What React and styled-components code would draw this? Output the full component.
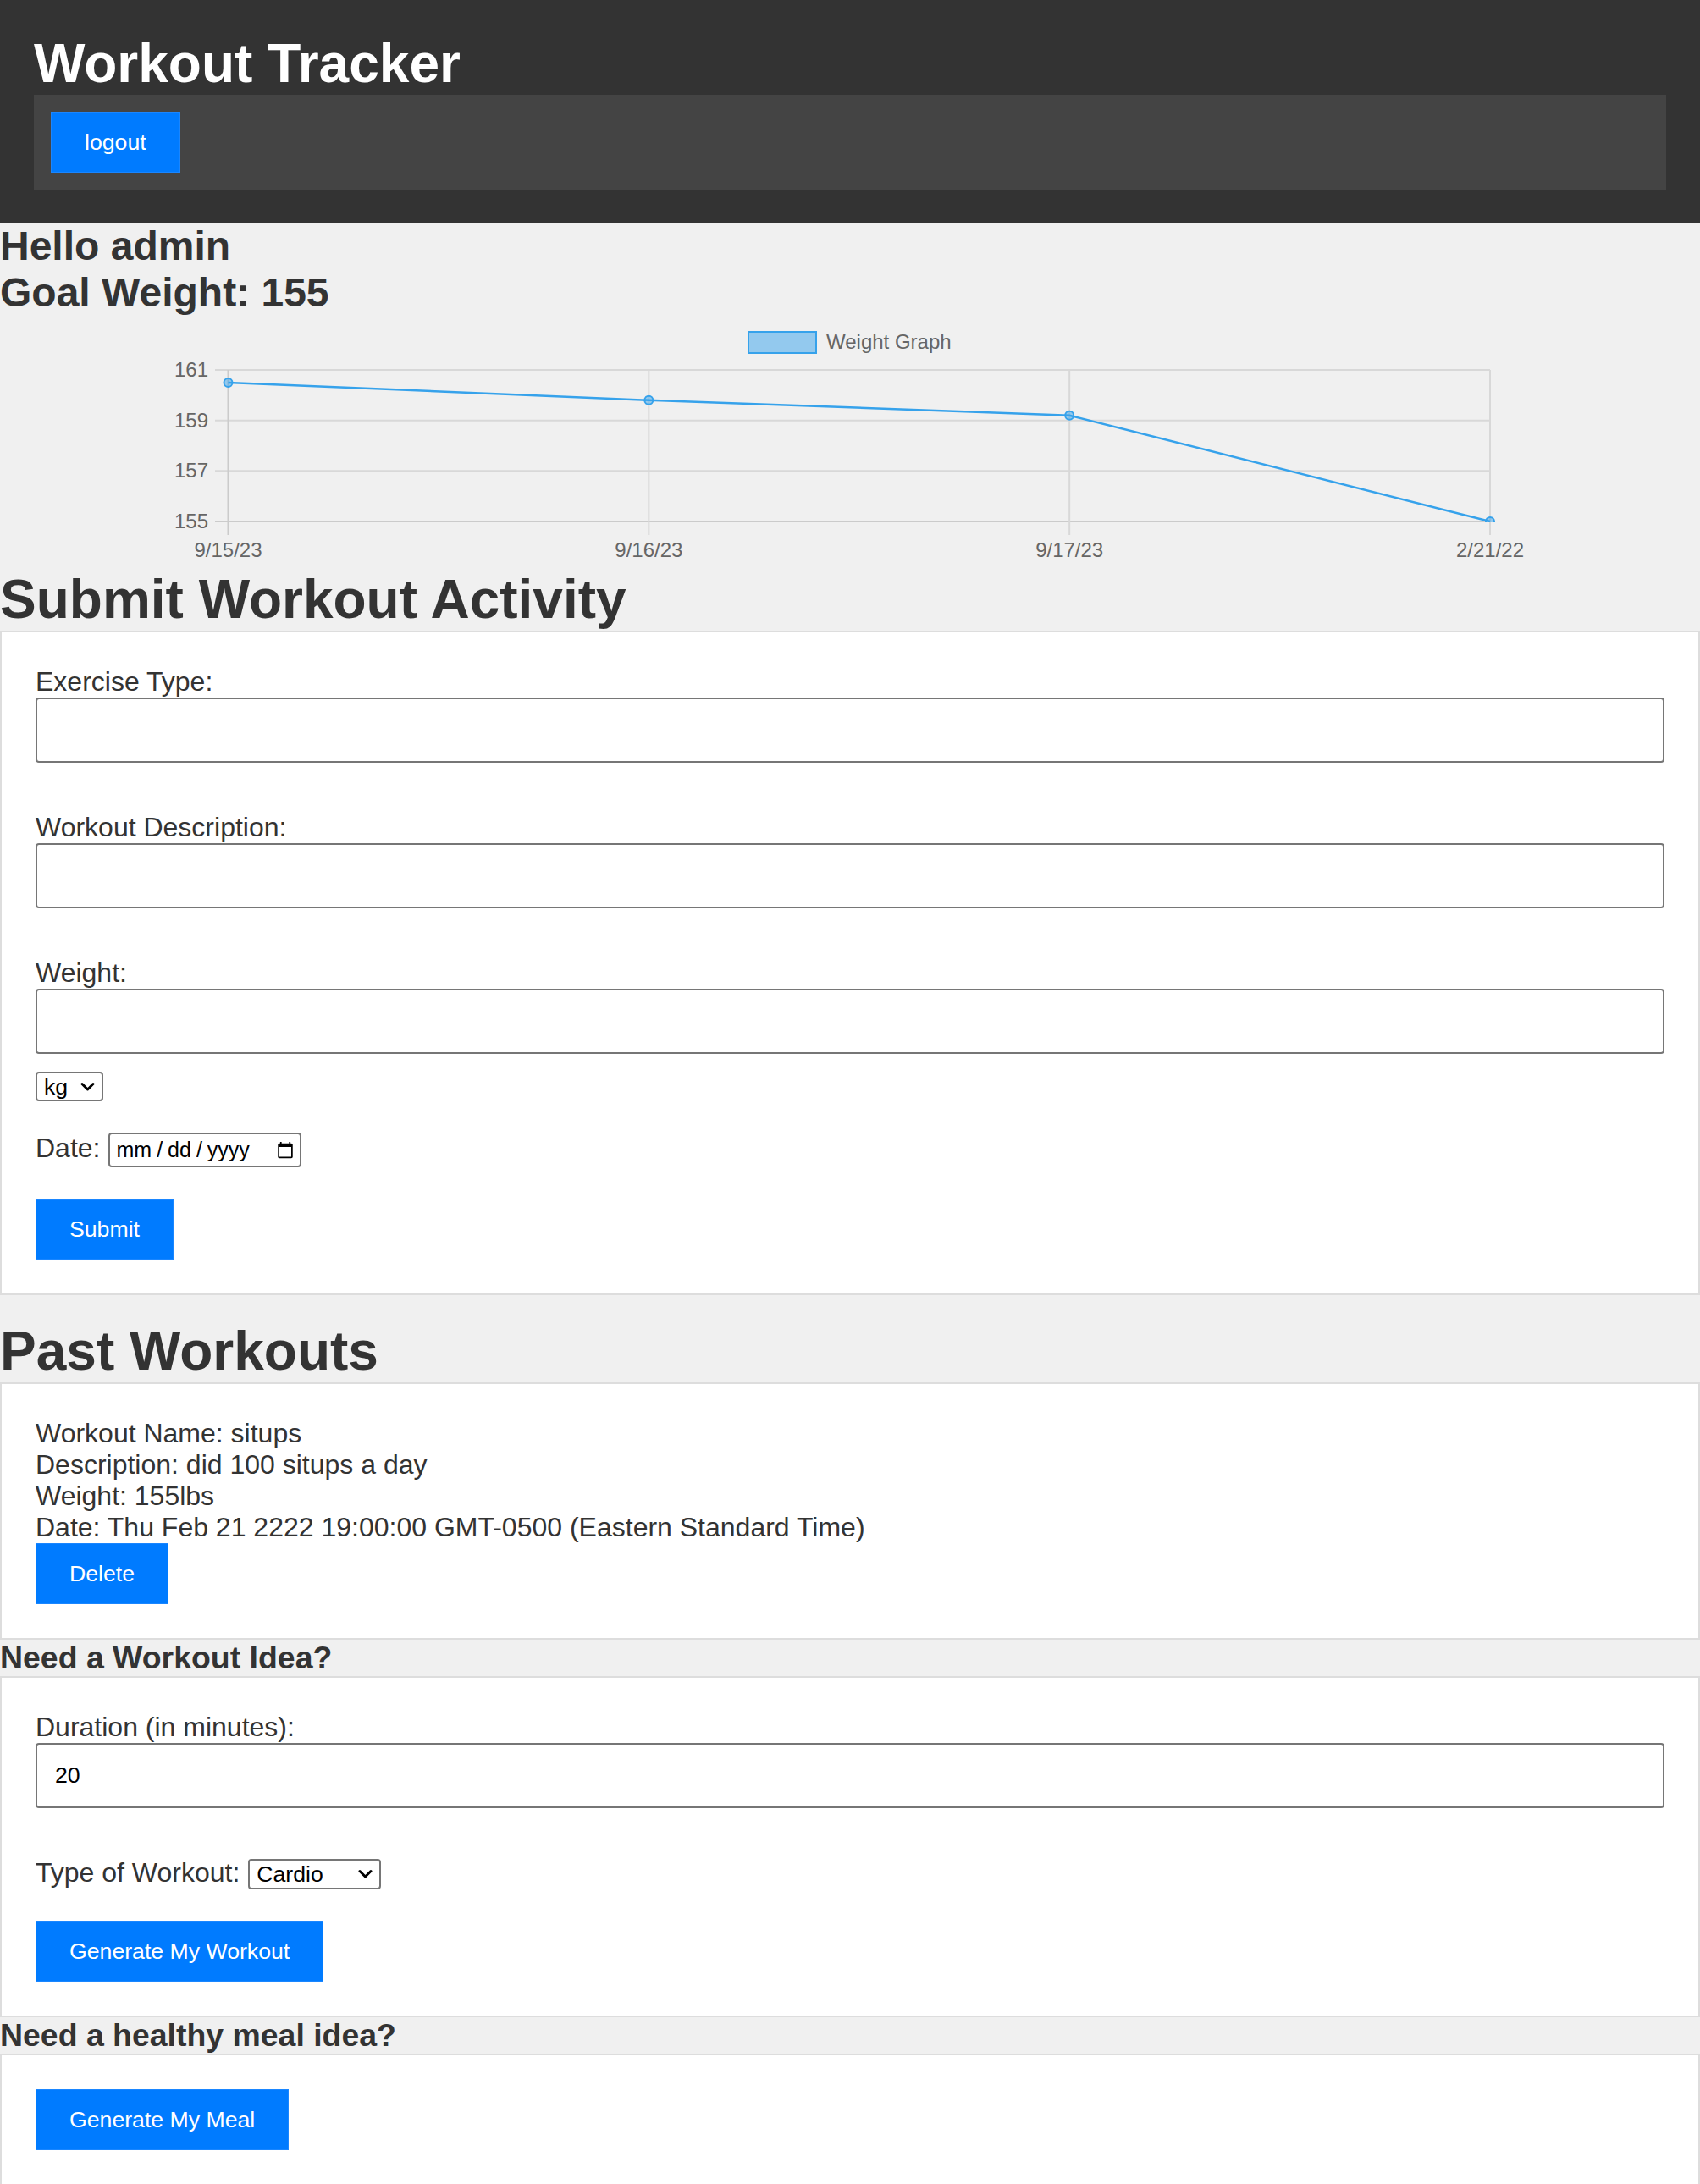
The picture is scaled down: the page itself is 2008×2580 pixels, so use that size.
import React from 'react'
import styled, { createGlobalStyle } from 'styled-components'

const GlobalStyle = createGlobalStyle`
	html {
		scrollbar-width: none;
	}
	html::-webkit-scrollbar {
		display: none;
	}
	* {
		box-sizing: border-box;
	}
	body {
		margin: 0;
		background: #f0f0f0;
		color: #333;
		font-family: 'Liberation Sans', Arial, sans-serif;
		font-size: 32px;
	}
`

const FONT = `'Liberation Sans', Arial, sans-serif`

const weights = [
	{ label: '9/15/23', value: 160.5 },
	{ label: '9/16/23', value: 159.8 },
	{ label: '9/17/23', value: 159.2 },
	{ label: '2/21/22', value: 155 },
]

const ticks = [161, 159, 157, 155]

// chart geometry (svg is 1600 wide, centred on the page)
const LEFT = 65.5
const RIGHT = 1556
const TOP = 64
const BOTTOM = 243
const yOf = v => BOTTOM - ((v - 155) / 6) * (BOTTOM - TOP)
const xOf = i => LEFT + (i * (RIGHT - LEFT)) / (weights.length - 1)

const WeightChart = () => {
	const points = weights.map((w, i) => `${xOf(i)},${yOf(w.value)}`).join(' ')
	return (
		<ChartWrap>
			<svg width='1600' height='298' viewBox='0 0 1600 298'>
				<defs>
					<clipPath id='plot'>
						<rect x='0' y='0' width='1600' height={BOTTOM + 1} />
					</clipPath>
				</defs>
				<rect
					x='680'
					y='19'
					width='80'
					height='25'
					fill='rgba(54,162,235,0.5)'
					stroke='rgb(54,162,235)'
					strokeWidth='2'
				/>
				<text x='772' y='39' fontSize='24' fill='#666' fontFamily={FONT}>
					Weight Graph
				</text>
				{ticks.map(t => (
					<g key={t}>
						<line
							x1='50'
							x2={RIGHT}
							y1={yOf(t)}
							y2={yOf(t)}
							stroke={t === 155 ? '#cbcbcb' : '#d8d8d8'}
							strokeWidth='2'
						/>
						<text
							x='42'
							y={yOf(t) + 8}
							textAnchor='end'
							fontSize='24'
							fill='#666'
							fontFamily={FONT}
						>
							{t}
						</text>
					</g>
				))}
				{weights.map((w, i) => (
					<g key={w.label}>
						<line
							x1={xOf(i)}
							x2={xOf(i)}
							y1={TOP}
							y2='259'
							stroke={i === 0 ? '#cbcbcb' : '#d8d8d8'}
							strokeWidth='2'
						/>
						<text
							x={xOf(i)}
							y='285'
							textAnchor='middle'
							fontSize='24'
							fill='#666'
							fontFamily={FONT}
						>
							{w.label}
						</text>
					</g>
				))}
				<g clipPath='url(#plot)'>
					<polyline
						points={points}
						fill='none'
						stroke='rgb(54,162,235)'
						strokeWidth='2.5'
					/>
					{weights.map((w, i) => (
						<circle
							key={w.label}
							cx={xOf(i)}
							cy={yOf(w.value)}
							r='5'
							fill='rgba(54,162,235,0.5)'
							stroke='rgb(54,162,235)'
							strokeWidth='2'
						/>
					))}
				</g>
			</svg>
		</ChartWrap>
	)
}

const Dropdown = ({ width, height, defaultValue, children }) => (
	<SelectWrap>
		<Select $w={width} $h={height} defaultValue={defaultValue}>
			{children}
		</Select>
		<Chevron width='17' height='11' viewBox='0 0 17 11'>
			<path
				d='M2 2 L8.5 8.5 L15 2'
				fill='none'
				stroke='#000'
				strokeWidth='3'
				strokeLinecap='round'
				strokeLinejoin='round'
			/>
		</Chevron>
	</SelectWrap>
)

const App = () => (
	<>
		<GlobalStyle />
		<Header>
			<AppTitle>Workout Tracker</AppTitle>
			<Nav>
				<Button type='button'>logout</Button>
			</Nav>
		</Header>

		<Greeting>Hello admin</Greeting>
		<Greeting>Goal Weight: 155</Greeting>

		<WeightChart />

		<PageHeading>Submit Workout Activity</PageHeading>
		<Card $mb={29}>
			<Label>Exercise Type:</Label>
			<TextInput $after={58} />
			<Label>Workout Description:</Label>
			<TextInput $after={58} />
			<Label>Weight:</Label>
			<TextInput $after={21} />
			<Dropdown width={80} height={35} defaultValue='kg'>
				<option value='kg'>kg</option>
				<option value='lbs'>lbs</option>
			</Dropdown>
			<InlineRow $top={37}>
				<Label as='span'>Date:</Label>
				<DateInput type='date' />
			</InlineRow>
			<Button type='button' $top={37}>
				Submit
			</Button>
		</Card>

		<PageHeading>Past Workouts</PageHeading>
		<Card>
			<InfoLine>Workout Name: situps</InfoLine>
			<InfoLine>Description: did 100 situps a day</InfoLine>
			<InfoLine>Weight: 155lbs</InfoLine>
			<InfoLine>
				Date: Thu Feb 21 2222 19:00:00 GMT-0500 (Eastern Standard Time)
			</InfoLine>
			<Button type='button'>Delete</Button>
		</Card>

		<SubHeading>Need a Workout Idea?</SubHeading>
		<Card>
			<Label>Duration (in minutes):</Label>
			<TextInput $after={58} defaultValue='20' />
			<InlineRow>
				<Label as='span'>Type of Workout:</Label>
				<Dropdown width={157} height={36} defaultValue='cardio'>
					<option value='cardio'>Cardio</option>
					<option value='strength'>Strength</option>
					<option value='yoga'>Yoga</option>
				</Dropdown>
			</InlineRow>
			<Button type='button' $top={37}>
				Generate My Workout
			</Button>
		</Card>

		<SubHeading>Need a healthy meal idea?</SubHeading>
		<Card>
			<Button type='button'>Generate My Meal</Button>
		</Card>
	</>
)

const Header = styled.header`
	background: #333;
	padding: 38px 40px 39px;
`

const AppTitle = styled.h1`
	margin: 0;
	color: #fff;
	font-size: 64px;
	font-weight: bold;
	line-height: normal;
`

const Nav = styled.nav`
	display: flex;
	background: #444;
	padding: 20px;
`

const Button = styled.button`
	align-self: flex-start;
	margin-top: ${p => p.$top || 0}px;
	padding: 20px 39px;
	border: 1px solid #1a86ff;
	border-radius: 0;
	background: #007bff;
	color: #fff;
	font-family: ${FONT};
	font-size: 26.67px;
	line-height: 30px;
	cursor: pointer;
`

const Greeting = styled.h2`
	margin: 0;
	font-size: 48px;
	font-weight: bold;
	line-height: normal;
`

const ChartWrap = styled.div`
	display: flex;
	justify-content: center;
	height: 298px;
	svg {
		display: block;
	}
`

const PageHeading = styled.h1`
	margin: 0;
	font-size: 64px;
	font-weight: bold;
	line-height: normal;
`

const SubHeading = styled.h3`
	margin: 0;
	font-size: 37.44px;
	font-weight: bold;
	line-height: normal;
`

const Card = styled.section`
	display: flex;
	flex-direction: column;
	align-items: flex-start;
	margin-bottom: ${p => p.$mb || 0}px;
	padding: 40px;
	border: 2px solid #ddd;
	background: #fff;
`

const Label = styled.label`
	display: block;
	font-size: 32px;
	line-height: normal;
	color: #333;
`

const TextInput = styled.input`
	align-self: stretch;
	height: 77px;
	margin: 0 0 ${p => p.$after || 0}px;
	padding: 0 21px;
	border: 2px solid #767676;
	border-radius: 4px;
	background: #fff;
	color: #000;
	font-family: ${FONT};
	font-size: 26.67px;
`

const SelectWrap = styled.span`
	position: relative;
	display: inline-flex;
`

const Select = styled.select`
	appearance: none;
	width: ${p => p.$w}px;
	height: ${p => p.$h}px;
	padding: 0 8px;
	border: 2px solid #767676;
	border-radius: 4px;
	background: #fff;
	color: #000;
	font-family: ${FONT};
	font-size: 26.67px;
`

const Chevron = styled.svg`
	position: absolute;
	right: 10px;
	top: 50%;
	transform: translateY(-50%);
	pointer-events: none;
`

const InlineRow = styled.div`
	display: flex;
	align-items: baseline;
	gap: 10px;
	margin-top: ${p => p.$top || 0}px;
`

const DateInput = styled.input`
	width: 228px;
	height: 41px;
	padding: 0 6px;
	border: 2px solid #767676;
	border-radius: 4px;
	background: #fff;
	color: #000;
	font-family: ${FONT};
	font-size: 25px;
	&::-webkit-datetime-edit-text {
		padding: 0 5px;
	}
	&::-webkit-calendar-picker-indicator {
		width: 22px;
		height: 22px;
		margin-left: auto;
		padding: 0;
	}
`

const InfoLine = styled.div`
	font-size: 32px;
	line-height: normal;
`

export default App
